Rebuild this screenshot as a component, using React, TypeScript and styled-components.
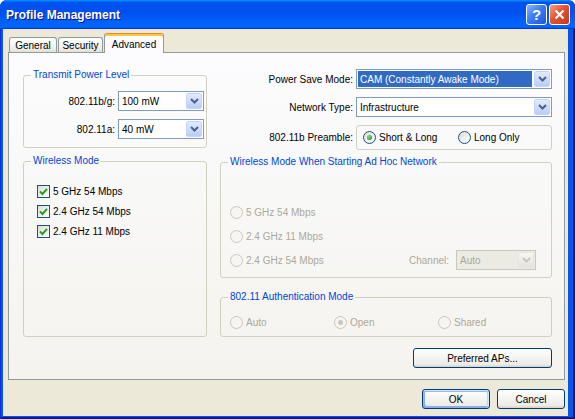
import React from 'react';
import styled, { createGlobalStyle, css } from 'styled-components';

const GlobalStyle = createGlobalStyle`
  html, body {
    margin: 0;
    padding: 0;
    background: #fff;
  }
  body {
    font-family: "Liberation Sans", Arial, sans-serif;
    font-size: 10px;
    color: #000;
  }
  * {
    box-sizing: border-box;
  }
`;

const Window = styled.div`
  width: 575px;
  height: 419px;
  display: flex;
  flex-direction: column;
  background: #0a55e3;
  border-radius: 7px 7px 0 0;
  overflow: hidden;
  box-shadow: inset 1px 0 #0831d9, inset -1px -1px #00138c, inset -2px -2px #001ea0;
`;

const TitleBar = styled.div`
  height: 29px;
  flex: none;
  display: flex;
  align-items: center;
  padding: 0 5px 0 6px;
  background: linear-gradient(
    180deg,
    #0997ff,
    #0053ee 8%,
    #0050ee 40%,
    #06f 88%,
    #06f 93%,
    #005bff 95%,
    #003dd7 96%,
    #003dd7
  );
`;

const Title = styled.span`
  flex: 1;
  color: #fff;
  font: bold 12px "Liberation Sans", Arial, sans-serif;
  text-shadow: 1px 1px #0f1089;
`;

const CaptionButtons = styled.div`
  display: flex;
  gap: 2px;
`;

const CaptionButton = styled.div<{ $kind: 'help' | 'close' }>`
  width: 21px;
  height: 21px;
  border: 1px solid #fff;
  border-radius: 3px;
  display: flex;
  align-items: center;
  justify-content: center;
  color: #fff;
  font: bold 15px "Liberation Sans", Arial, sans-serif;
  background: ${(p) =>
    p.$kind === 'close'
      ? 'linear-gradient(135deg, #f3a086, #e2532f 45%, #c7381d)'
      : 'linear-gradient(135deg, #8db4ff, #3d7cf2 45%, #1f56d6)'};
`;

const Client = styled.div`
  flex: 1;
  margin: 0 7px 3px 3px;
  background: #ece9d8;
  display: flex;
  flex-direction: column;
  padding: 4px 3px 7px 5px;
`;

const TabStrip = styled.div`
  display: flex;
  align-items: flex-end;
  height: 20px;
  padding-left: 1px;
  margin-bottom: -1px;
  position: relative;
  z-index: 1;
`;

const Tab = styled.div<{ $active?: boolean; $width: number }>`
  width: ${(p) => p.$width}px;
  display: flex;
  align-items: center;
  justify-content: center;
  border: 1px solid #919b9c;
  border-bottom: none;
  border-radius: 3px 3px 0 0;
  ${(p) =>
    p.$active
      ? css`
          height: 20px;
          padding-top: 1px;
          background: #fcfcfe;
          border-top-color: #e68b2c;
          box-shadow: inset 0 2px #ffc73c;
        `
      : css`
          height: 15px;
          margin: 0 1px 1px 0;
          background: linear-gradient(180deg, #fff, #f1f0ea 70%, #e3e0d2);
        `}
`;

const TabPanel = styled.div`
  flex: 1;
  border: 1px solid #919b9c;
  background: linear-gradient(180deg, #fcfcfe, #f4f3ee);
  display: grid;
  grid-template-columns: 184px 332px;
  grid-template-rows: auto auto;
  column-gap: 13px;
  row-gap: 11px;
  align-content: start;
  padding: 16px 12px 0 14px;
`;

const Column = styled.div`
  display: flex;
  flex-direction: column;
`;

const Group = styled.fieldset<{ $mt?: number; $grow?: boolean }>`
  margin: ${(p) => p.$mt ?? 0}px 0 0 0;
  padding: 0;
  min-width: 0;
  border: 1px solid #d0d0bf;
  border-radius: 3px;
  ${(p) => p.$grow && 'flex: 1;'}
`;

const Legend = styled.legend`
  margin-left: 7px;
  padding: 0 2px;
  line-height: 12px;
  color: #0046d5;
`;

const PowerGrid = styled.div`
  display: grid;
  grid-template-columns: 91px 86px;
  grid-auto-rows: 20px;
  column-gap: 3px;
  row-gap: 8px;
  align-items: center;
  padding: 10px 0 8px 0;
`;

const FieldLabel = styled.span`
  justify-self: end;
  white-space: nowrap;
`;

const Combo = styled.div<{ $disabled?: boolean; $width?: number }>`
  height: 20px;
  display: flex;
  ${(p) => p.$width && `width: ${p.$width}px;`}
  border: 1px solid ${(p) => (p.$disabled ? '#c9c7ba' : '#7f9db9')};
  background: ${(p) => (p.$disabled ? '#ebebe4' : '#fff')};
  color: ${(p) => (p.$disabled ? '#aca899' : '#000')};
`;

const ComboValue = styled.span<{ $selected?: boolean }>`
  flex: 1;
  display: flex;
  align-items: center;
  margin: 1px;
  padding-left: 2px;
  white-space: nowrap;
  ${(p) =>
    p.$selected &&
    css`
      background: #316ac5;
      color: #fff;
    `}
`;

const ComboArrow = styled.span<{ $disabled?: boolean }>`
  width: 16px;
  margin: 1px;
  border-radius: 2px;
  display: flex;
  align-items: center;
  justify-content: center;
  border: 1px solid ${(p) => (p.$disabled ? '#e6e6df' : '#c3d3fd')};
  background: ${(p) =>
    p.$disabled
      ? 'linear-gradient(180deg, #f7f7f3, #e4e4dd)'
      : 'linear-gradient(180deg, #e2ebfe, #b9cdf9)'};
`;

const Chevron = ({ disabled }: { disabled?: boolean }) => (
  <svg width="9" height="6" viewBox="0 0 9 6">
    <path
      d="M1 1 L4.5 4.5 L8 1"
      fill="none"
      stroke={disabled ? '#c9c7ba' : '#4d6185'}
      strokeWidth="2"
    />
  </svg>
);

const Select = ({
  value,
  selected,
  disabled,
  width,
}: {
  value: string;
  selected?: boolean;
  disabled?: boolean;
  width?: number;
}) => (
  <Combo $disabled={disabled} $width={width}>
    <ComboValue $selected={selected}>{value}</ComboValue>
    <ComboArrow $disabled={disabled}>
      <Chevron disabled={disabled} />
    </ComboArrow>
  </Combo>
);

const CheckList = styled.div`
  display: flex;
  flex-direction: column;
  gap: 4px;
  padding: 16px 0 0 13px;
`;

const Option = styled.label<{ $disabled?: boolean; $height?: number }>`
  display: flex;
  align-items: center;
  gap: 3px;
  height: ${(p) => p.$height ?? 16}px;
  white-space: nowrap;
  color: ${(p) => (p.$disabled ? '#aca899' : '#000')};
`;

const CheckBox = styled.span`
  width: 13px;
  height: 13px;
  flex: none;
  border: 1px solid #1c5180;
  background: linear-gradient(135deg, #dcdcd7, #fff);
  display: flex;
  align-items: center;
  justify-content: center;
`;

const RadioCircle = styled.span<{ $checked?: boolean; $disabled?: boolean }>`
  width: 13px;
  height: 13px;
  flex: none;
  border-radius: 50%;
  border: 1px solid ${(p) => (p.$disabled ? '#cac8bb' : '#1c5180')};
  background: ${(p) =>
    p.$disabled ? '#f6f5f1' : 'linear-gradient(135deg, #dcdcd7, #fff)'};
  display: flex;
  align-items: center;
  justify-content: center;
  &::after {
    content: '';
    display: ${(p) => (p.$checked ? 'block' : 'none')};
    width: 5px;
    height: 5px;
    border-radius: 50%;
    background: ${(p) =>
      p.$disabled ? '#cac8bb' : 'radial-gradient(circle at 35% 35%, #8adb8a, #21a121 75%)'};
  }
`;

const Check = ({ label }: { label: string }) => (
  <Option>
    <CheckBox>
      <svg width="9" height="9" viewBox="0 0 9 9">
        <path d="M1 4.5 L3.5 7 L8 1.8" fill="none" stroke="#21a121" strokeWidth="2" />
      </svg>
    </CheckBox>
    {label}
  </Option>
);

const Radio = ({
  label,
  checked,
  disabled,
  height,
}: {
  label: string;
  checked?: boolean;
  disabled?: boolean;
  height?: number;
}) => (
  <Option $disabled={disabled} $height={height}>
    <RadioCircle $checked={checked} $disabled={disabled} />
    {label}
  </Option>
);

const SettingsGrid = styled.div`
  display: grid;
  grid-template-columns: 133px 196px;
  grid-template-rows: 20px 20px 25px;
  column-gap: 3px;
  row-gap: 8px;
  align-items: center;
`;

const RadioBox = styled.div`
  height: 25px;
  border: 1px solid #d0d0bf;
  border-radius: 3px;
  display: grid;
  grid-template-columns: 95px auto;
  align-items: center;
  padding-left: 6px;
`;

const AdHocList = styled.div`
  display: flex;
  flex-direction: column;
  gap: 4px;
  padding: 34px 15px 7px 9px;
`;

const AdHocRow = styled.div`
  height: 20px;
  display: flex;
  align-items: center;
  justify-content: space-between;
`;

const ChannelField = styled.div`
  display: flex;
  align-items: center;
  gap: 7px;
  color: #aca899;
`;

const AuthRow = styled.div`
  display: grid;
  grid-template-columns: 104px 104px auto;
  align-items: center;
  padding: 12px 0 7px 9px;
`;

const PanelButtons = styled.div`
  grid-column: 2;
  display: flex;
  justify-content: flex-end;
`;

const Button = styled.button<{ $default?: boolean; $width: number }>`
  width: ${(p) => p.$width}px;
  height: 20px;
  padding: 0;
  font: 10px "Liberation Sans", Arial, sans-serif;
  color: #000;
  border: 1px solid #003c74;
  border-radius: 3px;
  background: linear-gradient(180deg, #fff, #ecebe6 86%, #d6d0c5);
  ${(p) =>
    p.$default &&
    css`
      box-shadow: inset -1px 1px #cee7ff, inset 1px 2px #98b8ea, inset -2px 2px #bcd4f6,
        inset 1px -1px #89ade4, inset 2px -2px #89ade4;
    `}
`;

const DialogButtons = styled.div`
  display: flex;
  justify-content: flex-end;
  gap: 7px;
  margin-top: 9px;
`;

export default function App() {
  return (
    <>
      <GlobalStyle />
      <Window>
        <TitleBar>
          <Title>Profile Management</Title>
          <CaptionButtons>
            <CaptionButton $kind="help">?</CaptionButton>
            <CaptionButton $kind="close">
              <svg width="11" height="11" viewBox="0 0 11 11">
                <path d="M1.5 1.5 L9.5 9.5 M9.5 1.5 L1.5 9.5" stroke="#fff" strokeWidth="2.2" />
              </svg>
            </CaptionButton>
          </CaptionButtons>
        </TitleBar>

        <Client>
          <TabStrip>
            <Tab $width={48}>General</Tab>
            <Tab $width={45}>Security</Tab>
            <Tab $width={60} $active>
              Advanced
            </Tab>
          </TabStrip>

          <TabPanel>
            <Column>
              <Group>
                <Legend>Transmit Power Level</Legend>
                <PowerGrid>
                  <FieldLabel>802.11b/g:</FieldLabel>
                  <Select value="100 mW" />
                  <FieldLabel>802.11a:</FieldLabel>
                  <Select value="40 mW" />
                </PowerGrid>
              </Group>
              <Group $mt={7} $grow>
                <Legend>Wireless Mode</Legend>
                <CheckList>
                  <Check label="5 GHz 54 Mbps" />
                  <Check label="2.4 GHz 54 Mbps" />
                  <Check label="2.4 GHz 11 Mbps" />
                </CheckList>
              </Group>
            </Column>

            <Column>
              <SettingsGrid>
                <FieldLabel>Power Save Mode:</FieldLabel>
                <Select value="CAM (Constantly Awake Mode)" selected />
                <FieldLabel>Network Type:</FieldLabel>
                <Select value="Infrastructure" />
                <FieldLabel>802.11b Preamble:</FieldLabel>
                <RadioBox>
                  <Radio label="Short & Long" checked />
                  <Radio label="Long Only" />
                </RadioBox>
              </SettingsGrid>

              <Group $mt={6}>
                <Legend>Wireless Mode When Starting Ad Hoc Network</Legend>
                <AdHocList>
                  <AdHocRow>
                    <Radio label="5 GHz 54 Mbps" disabled />
                  </AdHocRow>
                  <AdHocRow>
                    <Radio label="2.4 GHz 11 Mbps" disabled />
                  </AdHocRow>
                  <AdHocRow>
                    <Radio label="2.4 GHz 54 Mbps" disabled />
                    <ChannelField>
                      Channel:
                      <Select value="Auto" disabled width={80} />
                    </ChannelField>
                  </AdHocRow>
                </AdHocList>
              </Group>

              <Group $mt={13}>
                <Legend>802.11 Authentication Mode</Legend>
                <AuthRow>
                  <Radio label="Auto" disabled height={14} />
                  <Radio label="Open" checked disabled height={14} />
                  <Radio label="Shared" disabled height={14} />
                </AuthRow>
              </Group>
            </Column>

            <PanelButtons>
              <Button $width={139}>Preferred APs...</Button>
            </PanelButtons>
          </TabPanel>

          <DialogButtons>
            <Button $width={68} $default>
              OK
            </Button>
            <Button $width={68}>Cancel</Button>
          </DialogButtons>
        </Client>
      </Window>
    </>
  );
}
